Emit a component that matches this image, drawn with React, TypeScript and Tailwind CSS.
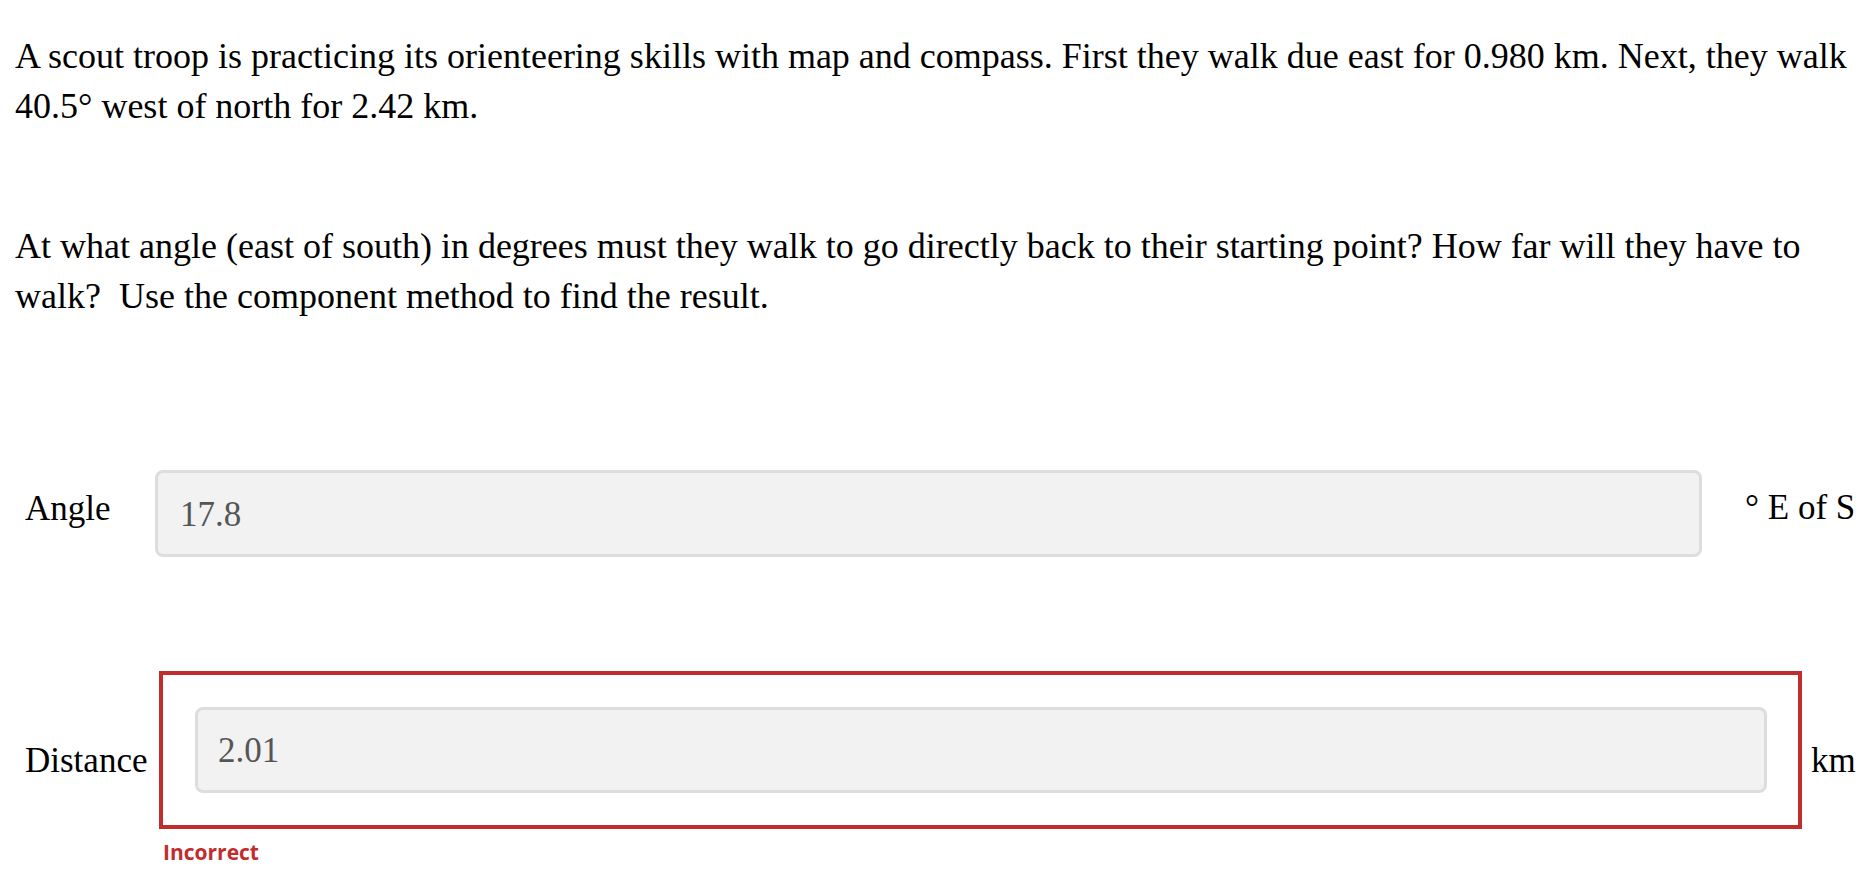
export default function App() {
  const serif = { fontFamily: '"Liberation Serif", "Times New Roman", serif' };

  return (
    <div className="min-h-screen bg-white px-[15px] pt-[31px] text-black" style={serif}>
      {/* Question text */}
      <p className="text-[36px] leading-[50px]">
        A scout troop is practicing its orienteering skills with map and compass. First they walk due east for 0.980 km. Next, they walk 40.5° west of north for 2.42 km.
      </p>
      <p className="mt-[90px] text-[36px] leading-[50px]">
        At what angle (east of south) in degrees must they walk to go directly back to their starting point? How far will they have to walk?&nbsp; Use the component method to find the result.
      </p>

      {/* Angle row */}
      <div className="mt-[149px] flex items-center pl-[10px] text-[35px]">
        <label className="w-[130px] shrink-0 -mt-[9px]">Angle</label>
        <div className="flex h-[87px] flex-1 items-center rounded-[8px] border-[3px] border-[#dddddd] bg-[#f2f2f2] px-[22px] pt-[4px] text-[#555555]">
          17.8
        </div>
        <div className="w-[159px] shrink-0 pl-[43px] -mt-[10px]">° E of S</div>
      </div>

      {/* Distance row */}
      <div className="mt-[114px] flex items-center pl-[10px] text-[35px]">
        <label className="w-[134px] shrink-0 pt-[23px]">Distance</label>
        <div className="flex-1 border-4 border-[#c12d2d] p-[32px] pr-[31px]">
          <div className="flex h-[86px] items-center rounded-[8px] border-[3px] border-[#dddddd] bg-[#f2f2f2] px-[20px] pt-[2px] text-[#555555]">
            2.01
          </div>
        </div>
        <div className="w-[59px] shrink-0 pl-[9px] pt-[23px]">km</div>
      </div>
      <div
        className="ml-[148px] mt-[7px] text-[21px] font-bold leading-[32px] text-[#c12d2d]"
        style={{ fontFamily: '"Open Sans", "Noto Sans", sans-serif' }}
      >
        Incorrect
      </div>
    </div>
  );
}
